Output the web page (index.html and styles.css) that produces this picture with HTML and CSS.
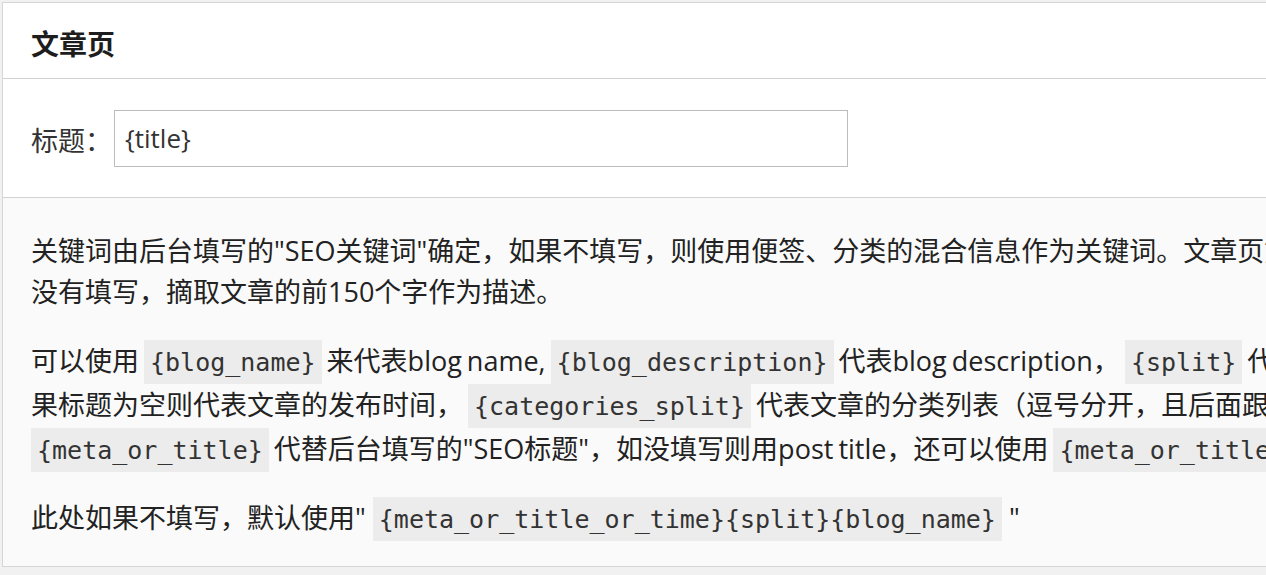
FILE: index.html
```html
<!DOCTYPE html>
<html lang="zh-CN">
<head>
    <meta charset="UTF-8">
    <meta name="viewport" content="width=device-width, initial-scale=1.0">
    <title>文章页</title>
    <link rel="stylesheet" href="styles.css">
</head>
<body>
    <div class="panel">
        <div class="panel-head">
            <h2>文章页</h2>
        </div>
        <div class="field-row">
            <label for="t-title">标题：</label>
            <input type="text" id="t-title" value="{title}">
        </div>
        <div class="notes">
            <p class="tight">关键词由后台填写的"SEO关键词"确定，如果不填写，则使用便签、分类的混合信息作为关键词。文章页如果<br>没有填写，摘取文章的前150个字作为描述。</p>
            <p class="codes">可以使用 <code>{blog_name}</code> 来代表blog name, <code>{blog_description}</code> 代表blog description， <code>{split}</code> 代表分隔符，如<br>果标题为空则代表文章的发布时间， <code>{categories_split}</code> 代表文章的分类列表（逗号分开，且后面跟分隔符），<br><code>{meta_or_title}</code> 代替后台填写的"SEO标题"，如没填写则用post title，还可以使用 <code>{meta_or_title_or_time}</code></p>
            <p>此处如果不填写，默认使用" <code>{meta_or_title_or_time}{split}{blog_name}</code> "</p>
        </div>
    </div>
</body>
</html>
```

FILE: styles.css
```css
body{
    margin: 0;
    background-color: #f1f1f1;
    font-family: "Open Sans", "Noto Sans CJK SC", sans-serif;
    color: #222;
    overflow: hidden;
}
.panel{
    margin: 2px 0 0 2px;
    width: 1500px;
    border: 1px solid #d6d6d6;
    background-color: #fafafa;
}
.panel-head{
    height: 71px;
    padding: 4px 0 0 28px;
    display: flex;
    align-items: center;
    background-color: #fff;
    border-bottom: 1px solid #d2d2d2;
}
h2{
    margin: 0;
    font-size: 28px;
    font-weight: bold;
    color: #1d1d1d;
}
.field-row{
    height: 118px;
    padding-left: 28px;
    display: flex;
    align-items: center;
    background-color: #fff;
    border-bottom: 1px solid #d2d2d2;
}
label{
    font-size: 27px;
    color: #333;
    width: 83px;
    padding-top: 3px;
}
input{
    box-sizing: border-box;
    width: 734px;
    height: 57px;
    padding: 0 10px;
    border: 1px solid #bcbcbc;
    font-family: "Open Sans", "Noto Sans CJK SC", sans-serif;
    font-size: 26px;
    color: #333;
    background-color: #fff;
    outline: none;
}
.notes{
    padding: 32px 28px 26px;
}
p{
    margin: 0 0 27px;
    font-size: 27px;
    line-height: 44px;
    white-space: nowrap;
}
p:last-child{
    margin-bottom: 0;
}
p.tight{
    line-height: 41px;
}
p.codes{
    margin-bottom: 25px;
    word-spacing: -2px;
}
code{
    font-family: "DejaVu Sans Mono", monospace;
    font-size: 25px;
    line-height: 1;
    padding: 8px 6px 7px;
    background-color: #ececec;
    color: #333;
}
```
